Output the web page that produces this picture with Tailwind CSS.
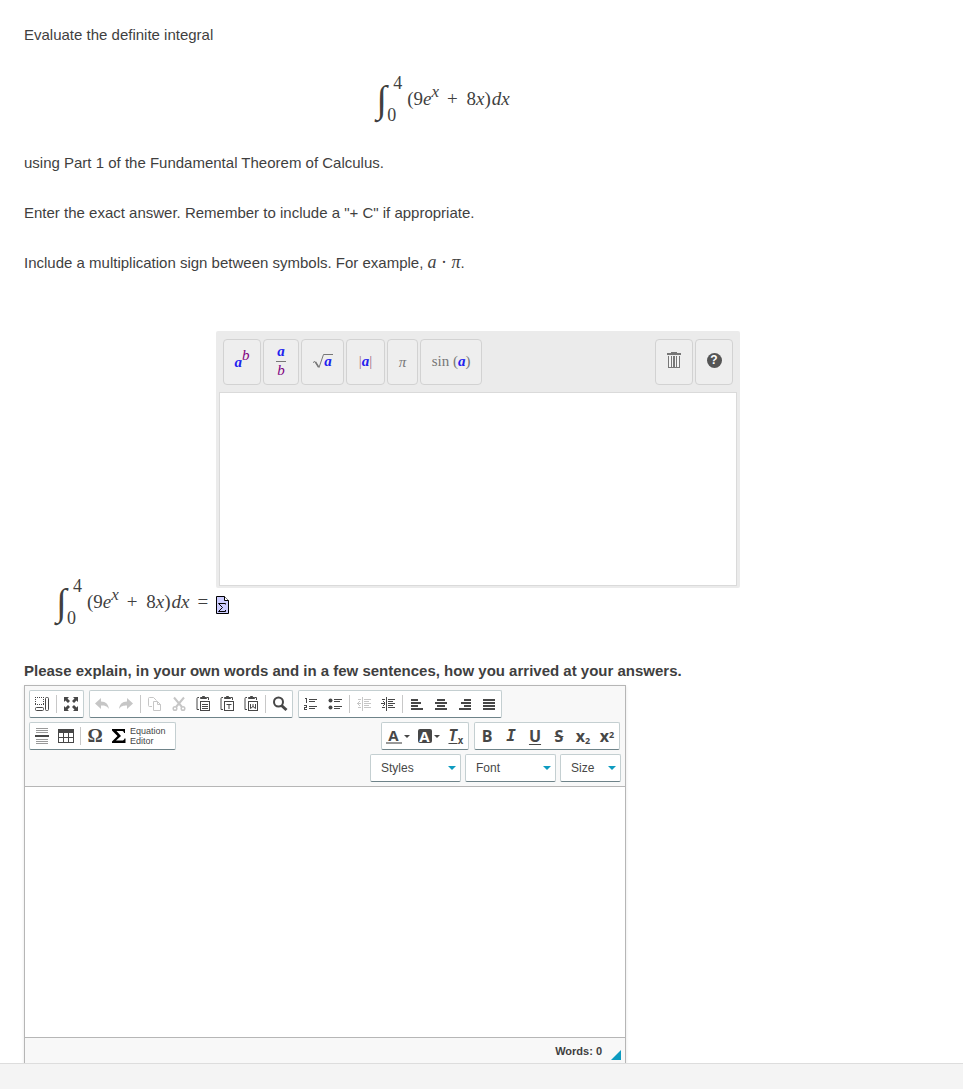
<!doctype html>
<html lang="en">
  <head>
    <meta charset="UTF-8" />
    <meta name="viewport" content="width=device-width, initial-scale=1.0" />
    <title>Evaluate the definite integral</title>
    <script src="https://cdn.jsdelivr.net/npm/@tailwindcss/browser@4"></script>
  </head>

  <body class="h-screen overflow-hidden bg-white font-['Liberation_Sans',Arial,sans-serif] text-[15px] leading-5 text-[#3f3f3f]">
    <main class="px-6 pt-[25px]">
      <!-- Question -->
      <section class="flex max-w-[838px] flex-col gap-[30px]">
        <p>Evaluate the definite integral</p>
        <div class="flex h-12 items-center justify-center font-['Liberation_Serif',serif] text-[19px]">
          <span class="w-[17px] text-[38px] leading-11 italic">∫</span>
          <span class="flex h-12 w-[14px] flex-col justify-between text-[18px] leading-4">
            <span>4</span>
            <span class="-ml-[6px]">0</span>
          </span>
          <span class="whitespace-nowrap">(9<i>e</i><sup class="text-[17px] italic">x</sup><span class="mr-1 ml-2">+</span> 8<i>x</i>)<i class="ml-px">dx</i></span>
        </div>
        <p>using Part 1 of the Fundamental Theorem of Calculus.</p>
        <p>Enter the exact answer. Remember to include a "+ C" if appropriate.</p>
        <p>
          Include a multiplication sign between symbols. For example,
          <span class="font-['Liberation_Serif',serif] text-[18px] leading-4"><i>a</i> · <i>π</i></span>.
        </p>
      </section>

      <!-- Answer -->
      <section class="mt-[58px] flex items-end pl-8">
        <div class="flex h-12 w-40 shrink-0 items-center font-['Liberation_Serif',serif] text-[19px]">
          <span class="w-[17px] text-[38px] leading-11 italic">∫</span>
          <span class="flex h-12 w-[14px] flex-col justify-between text-[18px] leading-4">
            <span>4</span>
            <span class="-ml-[6px]">0</span>
          </span>
          <span class="whitespace-nowrap">(9<i>e</i><sup class="text-[17px] italic">x</sup><span class="mr-1 ml-2">+</span> 8<i>x</i>)<i class="ml-px">dx</i><span class="ml-2">=</span></span>
        </div>
        <div class="w-full max-w-[524px] pb-3">
          <div class="rounded-xs bg-[#ebebeb] px-[3px] pb-[2px]">
            <div class="flex gap-[2px] px-1 py-2 pb-[7px] font-['Liberation_Serif',serif] text-[15px] text-[#777]">
              <button aria-label="Exponent" class="h-[46px] w-[38px] rounded border border-[#d2d2d2] bg-[#eee] font-bold italic text-[#2222ee]">a<sup class="text-[15px] font-normal text-[#800080]">b</sup></button>
              <button aria-label="Fraction" class="flex h-[46px] w-9 flex-col items-center justify-center rounded border border-[#d2d2d2] bg-[#eee] pb-[3px] font-bold italic leading-4 text-[#2222ee]">
                <span>a</span>
                <span class="mt-[2px] w-[10px] border-t border-[#777] text-center font-normal text-[#800080]">b</span>
              </button>
              <button aria-label="Square root" class="flex h-[46px] w-[43px] items-center justify-center rounded border border-[#d2d2d2] bg-[#eee] pb-[2px] text-[#2222ee]">
                <svg class="h-4 w-[20px] -mr-[9px]" viewBox="0 0 20 16" fill="none" stroke="#777"><path d="M0 9.500l2-1 4 6L10.500 1.500H20" /><path d="M2.500 9l3 5" stroke-width="1.500" /></svg>
                <b class="italic">a</b>
              </button>
              <button aria-label="Absolute value" class="h-[46px] w-[39px] rounded border border-[#d2d2d2] bg-[#eee] pb-[3px] text-[#a06a8a]">|<b class="italic text-[#2222ee]">a</b>|</button>
              <button aria-label="Pi" class="h-[46px] w-[31px] rounded border border-[#d2d2d2] bg-[#eee] italic">π</button>
              <button aria-label="Sine" class="h-[46px] w-[62px] rounded border border-[#d2d2d2] bg-[#eee] pb-[3px]">sin (<b class="italic text-[#2222ee]">a</b>)</button>
              <button aria-label="Clear" class="ml-auto flex h-[46px] w-[38px] items-center justify-center rounded border border-[#d2d2d2] bg-[#eee] pb-1">
                <svg class="h-4 w-[14px]" viewBox="0 0 14 16" fill="#777" shape-rendering="crispEdges"><path d="M4 0h6v1h4v2H0V1h4zM1 4h12v12H1z" /><path fill="#f4f4f4" d="M2 4h2v11H2zM5 4h1v11H5zM8 4h1v11H8zM10 4h2v11h-2z" /></svg>
              </button>
              <button aria-label="Help" class="flex h-[46px] w-[38px] items-center justify-center rounded border border-[#d2d2d2] bg-[#eee] pb-1">
                <span class="size-[15px] rounded-full bg-[#555] text-center font-['Liberation_Sans',sans-serif] text-[12px] leading-[15px] font-bold text-white">?</span>
              </button>
            </div>
            <textarea aria-label="Answer" class="block h-[194px] w-full resize-none border border-[#dadada] bg-white outline-none"></textarea>
          </div>
          <button aria-label="Open equation editor" class="mt-2 block">
            <svg class="h-[18px] w-[13px]" viewBox="0 0 13 18" fill="#ccf" stroke="#000"><path d="M.5.500h8l4 4v13H.500z" /><path fill="#fff" d="M8.500.500v4h4" /><path fill="none" d="M9.500 8.500V7.500h-7l4 4-4 4h7v-1.500" /></svg>
          </button>
        </div>
      </section>

      <!-- Explanation editor -->
      <section class="mt-[35px]">
        <label for="explanation" class="block font-bold">Please explain, in your own words and in a few sentences, how you arrived at your answers.</label>
        <div class="mt-1 max-w-[602px] border border-[#b6b6b6] shadow-sm">
          <div class="flex flex-col gap-1 border-b border-[#b6b6b6] bg-[#f8f8f8] p-1 text-[#474747]">
            <div class="flex gap-[5px]">
              <div class="flex h-7 items-center rounded-xs border border-[#c4cfd1] border-b-[#6e8389] bg-white">
                <button aria-label="Show blocks" class="flex w-6 justify-center"><svg class="size-4" viewBox="0 0 16 16" fill="none" stroke="currentColor"><path stroke-dasharray="1 1" d="M1 1.500h9M1 8.500h9M1.500 1v8M9.500 1v8" /><rect x="1.500" y="11.500" width="8" height="3" rx="1" /><rect x="11.500" y="1.500" width="3" height="13" rx="1" /></svg></button>
                <span class="mx-[2px] h-[18px] w-px bg-[#c8c8c8]"></span>
                <button aria-label="Maximize" class="flex w-6 justify-center"><svg class="size-4" viewBox="0 0 16 16" fill="currentColor"><path d="M1 1h5L4.500 2.500 7 5 5 7 2.500 4.500 1 6zM15 1v5l-1.500-1.500L11 7 9 5l2.500-2.500L10 1zM1 15v-5l1.500 1.500L5 9l2 2-2.500 2.500L6 15zM15 15h-5l1.500-1.500L9 11l2-2 2.500 2.500L15 10z" /></svg></button>
              </div>
              <div class="flex h-7 items-center rounded-xs border border-[#c4cfd1] border-b-[#6e8389] bg-white">
                <button aria-label="Undo" class="flex w-6 justify-center text-[#c6c6c6]"><svg class="size-4" viewBox="0 0 16 16" fill="currentColor"><path d="M1 7.500L7 2v3.500c5 0 7.500 3 8 7.500-2-3-4-3.500-8-3.500V13z" /></svg></button>
                <button aria-label="Redo" class="flex w-6 justify-center text-[#c6c6c6]"><svg class="size-4" viewBox="0 0 16 16" fill="currentColor"><path d="M15 7.500L9 2v3.500c-5 0-7.500 3-8 7.500 2-3 4-3.500 8-3.500V13z" /></svg></button>
                <span class="mx-[2px] h-[18px] w-px bg-[#c8c8c8]"></span>
                <button aria-label="Copy" class="flex w-6 justify-center text-[#c6c6c6]"><svg class="size-4" viewBox="0 0 16 16" fill="none" stroke="currentColor"><path d="M5 10.500H2.500a1 1 0 0 1-1-1v-7a1 1 0 0 1 1-1h4l3 3" /><path d="M6.500 5.500h4l3 3v6h-7zM10.500 5.500v3h3" /></svg></button>
                <button aria-label="Cut" class="flex w-6 justify-center text-[#c6c6c6]"><svg class="size-4" viewBox="-1 0 16 16" fill="none" stroke="currentColor"><path stroke-width="2" d="M2 1.500l8 9.500M12 1.500L4 11" /><circle cx="3" cy="12.500" r="1.800" stroke-width="1.500" /><circle cx="11" cy="12.500" r="1.800" stroke-width="1.500" /></svg></button>
                <button aria-label="Paste" class="flex w-6 justify-center"><svg class="size-4" viewBox="-1 0 16 16" fill="none" stroke="currentColor"><path d="M3 1.500H2a1 1 0 0 0-1 1v11h2M11 1.500h1.500V4" /><path fill="currentColor" d="M4.500 2.500V1.500h1.500L6.500.500h2l.5 1h1.500v1z" /><rect x="4.500" y="5.500" width="9" height="9" /><path d="M6 8.500h6M6 10.500h6M6 12.500h6" /></svg></button>
                <button aria-label="Paste as plain text" class="flex w-6 justify-center"><svg class="size-4" viewBox="-1 0 16 16" fill="none" stroke="currentColor"><path d="M3 1.500H2a1 1 0 0 0-1 1v11h2M11 1.500h1.500V4" /><path fill="currentColor" d="M4.500 2.500V1.500h1.500L6.500.500h2l.5 1h1.500v1z" /><rect x="4.500" y="5.500" width="9" height="9" /><path d="M6.500 8.500h5M9 8v5" /></svg></button>
                <button aria-label="Paste from Word" class="flex w-6 justify-center"><svg class="size-4" viewBox="-1 0 16 16" fill="none" stroke="currentColor"><path d="M3 1.500H2a1 1 0 0 0-1 1v11h2M11 1.500h1.500V4" /><path fill="currentColor" d="M4.500 2.500V1.500h1.500L6.500.500h2l.5 1h1.500v1z" /><rect x="4.500" y="5.500" width="9" height="9" /><path d="M6.500 8v4.500L9 10.500l2.500 2V8M9 8v3" /></svg></button>
                <span class="mx-[2px] h-[18px] w-px bg-[#c8c8c8]"></span>
                <button aria-label="Find" class="flex w-6 justify-center"><svg class="size-4" viewBox="0 0 16 16" fill="none" stroke="currentColor"><circle cx="6.500" cy="6" r="4.500" stroke-width="2" /><path stroke-width="3" d="M9.500 9.500l5 4.500" /></svg></button>
              </div>
              <div class="flex h-7 items-center rounded-xs border border-[#c4cfd1] border-b-[#6e8389] bg-white">
                <button aria-label="Numbered list" class="flex w-6 justify-center"><svg class="size-4" viewBox="0 0 16 16" fill="none" stroke="currentColor" shape-rendering="crispEdges"><path d="M6 3.500h8M6 5.500h6M6 10.500h8M6 12.500h6M1.500 2.500h2V7M1 9.500h2.500v2h-2v2H4" /></svg></button>
                <button aria-label="Bulleted list" class="flex w-6 justify-center"><svg class="size-4" viewBox="0 0 16 16" fill="currentColor"><circle cx="3.500" cy="4.500" r="2" /><circle cx="3.500" cy="11.500" r="2" /><path d="M7 3h8v1H7zM7 5h6v1H7zM7 10h8v1H7zM7 12h6v1H7z" /></svg></button>
                <span class="mx-[2px] h-[18px] w-px bg-[#c8c8c8]"></span>
                <button aria-label="Decrease indent" class="flex w-6 justify-center text-[#c6c6c6]"><svg class="size-4" viewBox="0 0 16 16" fill="currentColor" shape-rendering="crispEdges"><path d="M6 1h1v14H6zM8 3h7v1H8zM8 5h5v1H8zM8 7h7v1H8zM8 9h5v1H8zM8 11h7v1H8zM2 3h3v1H2zM2 11h3v1H2zM1 7h4v1H1zM2 6h1v3H2zM3 5h1v1H3zM3 9h1v1H3z" /></svg></button>
                <button aria-label="Increase indent" class="flex w-6 justify-center"><svg class="size-4" viewBox="0 0 16 16" fill="currentColor" shape-rendering="crispEdges"><path d="M6 1h1v14H6zM8 3h7v1H8zM8 5h5v1H8zM8 7h7v1H8zM8 9h5v1H8zM8 11h7v1H8zM2 3h3v1H2zM2 11h3v1H2zM1 7h4v1H1zM4 6h1v3H4zM3 5h1v1H3zM3 9h1v1H3z" /></svg></button>
                <span class="mx-[2px] h-[18px] w-px bg-[#c8c8c8]"></span>
                <button aria-label="Align left" class="flex w-6 justify-center"><svg class="size-4" viewBox="0 0 16 16" fill="currentColor" shape-rendering="crispEdges"><path d="M2 3h7v2H2zM2 6h10v2H2zM2 9h7v2H2zM2 12h12v2H2z" /></svg></button>
                <button aria-label="Center" class="flex w-6 justify-center"><svg class="size-4" viewBox="0 0 16 16" fill="currentColor" shape-rendering="crispEdges"><path d="M4 3h8v2H4zM2 6h12v2H2zM4 9h8v2H4zM2 12h12v2H2z" /></svg></button>
                <button aria-label="Align right" class="flex w-6 justify-center"><svg class="size-4" viewBox="0 0 16 16" fill="currentColor" shape-rendering="crispEdges"><path d="M7 3h7v2H7zM4 6h10v2H4zM7 9h7v2H7zM2 12h12v2H2z" /></svg></button>
                <button aria-label="Justify" class="flex w-6 justify-center"><svg class="size-4" viewBox="0 0 16 16" fill="currentColor" shape-rendering="crispEdges"><path d="M2 3h12v2H2zM2 6h12v2H2zM2 9h12v2H2zM2 12h12v2H2z" /></svg></button>
              </div>
            </div>

            <div class="flex gap-[5px] pr-px">
              <div class="mr-auto flex h-7 items-center rounded-xs border border-[#c4cfd1] border-b-[#6e8389] bg-white">
                <button aria-label="Horizontal line" class="flex w-6 justify-center"><svg class="size-4" viewBox="0 0 16 16" fill="currentColor" shape-rendering="crispEdges"><path d="M1 7h14v2H1z" /><path fill="#999" d="M2 0h12v1H2zM2 2h12v1H2zM2 4h12v1H2zM2 11h12v1H2zM2 13h12v1H2zM2 15h12v1H2z" /></svg></button>
                <button aria-label="Table" class="flex w-6 justify-center"><svg class="size-4" viewBox="0 0 16 16" fill="none" stroke="currentColor" shape-rendering="crispEdges"><path fill="currentColor" d="M.500 1.500h15v3H.500z" /><path d="M.500 4v10.500h15V4M.500 9.500h15M5.500 4v10M10.500 4v10" /></svg></button>
                <span class="mx-[2px] h-[18px] w-px bg-[#c8c8c8]"></span>
                <button aria-label="Special character" class="w-6 font-['Liberation_Serif',serif] text-[19px] font-bold">Ω</button>
                <button class="flex w-[68px] items-center gap-[3px] pl-1 text-left text-[9px] leading-[10px]">
                  <svg class="size-4 shrink-0 text-black" viewBox="0 0 16 16" fill="currentColor"><path d="M1 1h13v4h-1c0-1.500-1-2-2.500-2H5.500L10 8l-5 4.500h6c1.500 0 2-.5 2.500-2h1V15H1v-1.500L6.500 8 1 2.500z" /></svg>
                  <span>Equation Editor</span>
                </button>
              </div>
              <div class="flex h-7 items-center rounded-xs border border-[#c4cfd1] border-b-[#6e8389] bg-white font-['Open_Sans',sans-serif] text-[15px] font-bold">
                <button aria-label="Text color" class="flex w-[31px] items-center justify-center gap-[2px]"><span class="w-4 border-b-2 border-[#999] leading-[14px]">A</span><svg class="h-[3px] w-[6px]" viewBox="0 0 6 3" fill="currentColor"><path d="M0 0h6L3 3z" /></svg></button>
                <button aria-label="Background color" class="flex w-[31px] items-center justify-center gap-[2px]"><span class="w-[14px] rounded-xs bg-[#474747] leading-[14px] text-white">A</span><svg class="h-[3px] w-[6px]" viewBox="0 0 6 3" fill="currentColor"><path d="M0 0h6L3 3z" /></svg></button>
                <button aria-label="Remove format" class="w-6 font-['DejaVu_Sans_Mono',monospace]"><i class="underline underline-offset-2">T</i><sub class="text-[10px]">x</sub></button>
              </div>
              <div class="flex h-7 items-center rounded-xs border border-[#c4cfd1] border-b-[#6e8389] bg-white font-['Open_Sans',sans-serif] text-[16px] font-bold">
                <button aria-label="Bold" class="w-6">B</button>
                <button aria-label="Italic" class="w-6 font-['DejaVu_Sans_Mono',monospace] italic">I</button>
                <button aria-label="Underline" class="w-6 underline underline-offset-2">U</button>
                <button aria-label="Strikethrough" class="w-6 line-through">S</button>
                <button aria-label="Subscript" class="w-6">x<sub class="text-[9px]">2</sub></button>
                <button aria-label="Superscript" class="w-6">x<sup class="text-[9px]">2</sup></button>
              </div>
            </div>

            <div class="flex justify-end gap-1 text-[12px]">
              <div class="grid items-center">
                <select aria-label="Styles" class="col-start-1 row-start-1 h-7 w-[91px] appearance-none rounded-xs border border-[#c4cfd1] border-b-[#6e8389] bg-white pl-[10px]"><option>Styles</option></select>
                <svg class="pointer-events-none col-start-1 row-start-1 mr-[5px] h-1 w-2 justify-self-end" viewBox="0 0 8 4" fill="#0d9bc0"><path d="M0 0h8L4 4z" /></svg>
              </div>
              <div class="grid items-center">
                <select aria-label="Font" class="col-start-1 row-start-1 h-7 w-[91px] appearance-none rounded-xs border border-[#c4cfd1] border-b-[#6e8389] bg-white pl-[10px]"><option>Font</option></select>
                <svg class="pointer-events-none col-start-1 row-start-1 mr-[5px] h-1 w-2 justify-self-end" viewBox="0 0 8 4" fill="#0d9bc0"><path d="M0 0h8L4 4z" /></svg>
              </div>
              <div class="grid items-center">
                <select aria-label="Size" class="col-start-1 row-start-1 h-7 w-[61px] appearance-none rounded-xs border border-[#c4cfd1] border-b-[#6e8389] bg-white pl-[10px]"><option>Size</option></select>
                <svg class="pointer-events-none col-start-1 row-start-1 mr-[5px] h-1 w-2 justify-self-end" viewBox="0 0 8 4" fill="#0d9bc0"><path d="M0 0h8L4 4z" /></svg>
              </div>
            </div>
          </div>
          <textarea id="explanation" class="block h-[250px] w-full resize-none bg-white p-2 outline-none"></textarea>
          <div class="flex h-[30px] items-center justify-end gap-[9px] border-t border-[#b6b6b6] bg-[#f8f8f8] pr-1 pb-1 text-[11px] font-bold">
            <span>Words: 0</span>
            <svg class="mt-2 size-[10px]" viewBox="0 0 11 11" fill="#0d9bc0"><path d="M11 0v11H0z" /></svg>
          </div>
        </div>
      </section>
    </main>

    <!-- Bottom bar -->
    <footer class="fixed inset-x-0 bottom-0 h-[26px] border-t border-[#ddd] bg-[#f4f4f4]"></footer>
  </body>
</html>
